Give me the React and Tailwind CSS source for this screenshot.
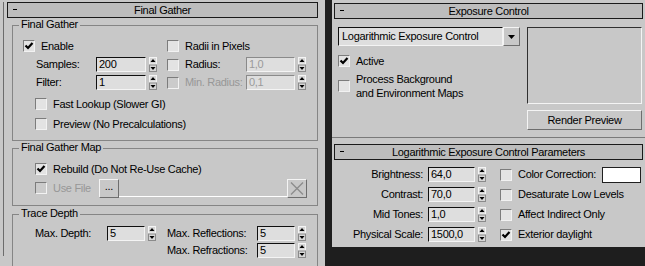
import React from "react";

const fontCls = "font-['Liberation_Sans',Arial,sans-serif] text-[11px] tracking-[-0.3px] leading-[13px]";

function Check({ checked, disabled }) {
  return (
    <span
      className={`flex h-[12px] w-[12px] shrink-0 items-center justify-center border border-t-[#7c7c7c] border-l-[#7c7c7c] border-b-[#f2f2f2] border-r-[#f2f2f2] ${
        disabled ? "bg-[#cbcbcb]" : "bg-[#e3e3e3]"
      }`}
    >
      {checked && (
        <svg width="10" height="10" viewBox="0 0 10 10">
          <path d="M1.5 4.5 L4 7 L8.5 2" stroke="#000" strokeWidth="2.2" fill="none" />
        </svg>
      )}
    </span>
  );
}

function CheckRow({ label, checked, disabled, className = "" }) {
  return (
    <div className={`flex h-[16px] items-center gap-[6px] ${className}`}>
      <Check checked={checked} disabled={disabled} />
      <span className={`whitespace-nowrap ${disabled ? "text-[#979797]" : "text-black"}`}>{label}</span>
    </div>
  );
}

function Spinner() {
  return (
    <span className="flex h-[15px] w-[8px] shrink-0">
      <svg width="8" height="15" viewBox="0 0 8 15">
        <rect x="0" y="0" width="8" height="15" fill="#d6d6d6" />
        <rect x="0.5" y="0.5" width="7" height="6.5" fill="none" stroke="#f4f4f4" />
        <rect x="0.5" y="8" width="7" height="6.5" fill="none" stroke="#8a8a8a" />
        <path d="M4 2 L6.5 5 L1.5 5 Z" fill="#000" />
        <path d="M1.5 10 L6.5 10 L4 13 Z" fill="#000" />
      </svg>
    </span>
  );
}

function Field({ value, className = "", disabled }) {
  return (
    <span
      className={`flex h-[15px] shrink-0 items-center border border-b-[#f4f4f4] border-r-[#f4f4f4] bg-[#dedede] pl-[2px] ${
        disabled ? "border-t-[#8a8a8a] border-l-[#8a8a8a] text-[#9a9a9a]" : "border-t-[#101010] border-l-[#101010] text-black"
      } ${className}`}
    >
      {value}
    </span>
  );
}

function Header({ title, className = "" }) {
  return (
    <div className={`relative flex h-[16px] items-center justify-center border border-[#1a1a1a] bg-[#bdbdbd] ${className}`}>
      <span className="absolute left-[5px] top-[6px] h-[1px] w-[4px] bg-black" />
      <span className="text-black">{title}</span>
    </div>
  );
}

function Group({ title, className = "", children }) {
  return (
    <div className={`relative border border-[#858585] ${className}`}>
      <span className="absolute -top-[8px] left-[6px] bg-[#c8c8c8] px-[2px] text-black">{title}</span>
      {children}
    </div>
  );
}

function Button({ children, className = "" }) {
  return (
    <span
      className={`flex items-center justify-center border border-t-[#f4f4f4] border-l-[#f4f4f4] border-b-[#6e6e6e] border-r-[#6e6e6e] bg-[#c8c8c8] text-black ${className}`}
    >
      {children}
    </span>
  );
}

function ParamRow({ label, value, check, checked, swatch, className = "" }) {
  return (
    <div className={`flex h-[15px] items-center ${className}`}>
      <span className="mr-[5px] w-[91px] whitespace-nowrap text-right">{label}</span>
      <Field value={value} className="w-[47px]" />
      <span className="ml-[3px]">
        <Spinner />
      </span>
      <div className="ml-[14px] flex items-center gap-[6px]">
        <Check checked={checked} />
        <span className={`whitespace-nowrap ${swatch ? "w-[78px]" : ""}`}>{check}</span>
        {swatch && <span className="h-[16px] w-[39px] border border-[#202020] bg-white" />}
      </div>
    </div>
  );
}

export default function App() {
  return (
    <div className={`flex h-[266px] w-[645px] overflow-hidden bg-[#1e1e1e] ${fontCls}`}>
      {/* left: final gather rollout */}
      <div className="h-full w-[325px] shrink-0 bg-[#c8c8c8] pl-[3px] pt-[12px]">
        <div className="h-full border-l border-[#6c6c6c] pl-[3px]">
          <Header title="Final Gather" className="-mt-[10px] w-[311px]" />

          <Group title="Final Gather" className="ml-[5px] mt-[7px] h-[116px] w-[306px] pt-[12px]">
            <div className="flex">
              <div className="w-[154px] pl-[10px]">
                <CheckRow label="Enable" checked />
              </div>
              <CheckRow label="Radii in Pixels" />
            </div>
            <div className="mt-[3px] flex h-[15px] items-center">
              <div className="flex w-[154px] items-center pl-[23px]">
                <span className="w-[60px]">Samples:</span>
                <Field value="200" className="w-[50px]" />
                <span className="ml-[3px]"><Spinner /></span>
              </div>
              <div className="flex items-center">
                <Check />
                <span className="ml-[6px] w-[61px]">Radius:</span>
                <Field value="1,0" className="w-[49px]" disabled />
                <span className="ml-[3px]"><Spinner /></span>
              </div>
            </div>
            <div className="mt-[3px] flex h-[15px] items-center">
              <div className="flex w-[154px] items-center pl-[23px]">
                <span className="w-[60px]">Filter:</span>
                <Field value="1" className="w-[50px]" />
                <span className="ml-[3px]"><Spinner /></span>
              </div>
              <div className="flex items-center">
                <Check disabled />
                <span className="ml-[6px] w-[61px] whitespace-nowrap text-[#979797]">Min. Radius:</span>
                <Field value="0,1" className="w-[49px]" disabled />
                <span className="ml-[3px]"><Spinner /></span>
              </div>
            </div>
            <CheckRow label="Fast Lookup (Slower GI)" className="ml-[22px] mt-[6px]" />
            <CheckRow label="Preview (No Precalculations)" className="ml-[22px] mt-[4px]" />
          </Group>

          <Group title="Final Gather Map" className="ml-[5px] mt-[7px] h-[58px] w-[306px] pt-[12px]">
            <CheckRow label="Rebuild (Do Not Re-Use Cache)" checked className="ml-[22px]" />
            <div className="mt-[1px] flex h-[20px] items-center pl-[22px]">
              <Check disabled />
              <span className="ml-[6px] w-[46px] text-[#979797]">Use File</span>
              <Button className="h-[19px] w-[20px] pb-[3px]">...</Button>
              <span className="h-[18px] w-[168px] border-b border-white" />
              <Button className="h-[19px] w-[20px]">
                <svg width="14" height="13" viewBox="0 0 14 13">
                  <path d="M1 0.5 L13 12.5 M13 0.5 L1 12.5" stroke="#8c8c8c" strokeWidth="1.4" />
                </svg>
              </Button>
            </div>
          </Group>

          <Group title="Trace Depth" className="ml-[5px] mt-[8px] h-[60px] w-[306px] pt-[11px]">
            <div className="flex h-[15px] items-center">
              <div className="flex w-[154px] items-center pl-[22px]">
                <span className="w-[72px]">Max. Depth:</span>
                <Field value="5" className="w-[38px]" />
                <span className="ml-[3px]"><Spinner /></span>
              </div>
              <div className="flex items-center">
                <span className="w-[90px] whitespace-nowrap">Max. Reflections:</span>
                <Field value="5" className="w-[38px]" />
                <span className="ml-[3px]"><Spinner /></span>
              </div>
            </div>
            <div className="mt-[2px] flex h-[15px] items-center pl-[154px]">
              <span className="w-[90px] whitespace-nowrap">Max. Refractions:</span>
              <Field value="5" className="w-[38px]" />
              <span className="ml-[3px]"><Spinner /></span>
            </div>
          </Group>
        </div>
      </div>

      {/* right: exposure control */}
      <div className="ml-[7px] h-[247px] w-[313px] shrink-0 bg-[#c8c8c8]">
        <Header title="Exposure Control" className="ml-[2px] mt-[3px] w-[309px]" />
        <div className="mt-[8px] flex pl-[6px]">
          <div className="w-[182px]">
            <div className="flex h-[19px]">
              <span className="flex flex-1 items-center border border-t-[#101010] border-l-[#101010] border-b-[#f4f4f4] border-r-[#f4f4f4] bg-[#dedede] pl-[3px] whitespace-nowrap">
                Logarithmic Exposure Control
              </span>
              <Button className="h-[19px] w-[17px]">
                <svg width="7" height="4" viewBox="0 0 7 4">
                  <path d="M0 0 L7 0 L3.5 4 Z" fill="#000" />
                </svg>
              </Button>
            </div>
            <CheckRow label="Active" checked className="mt-[7px]" />
            <div className="mt-[3px] flex items-center gap-[6px]">
              <Check />
              <span className="leading-[14px]">
                Process Background
                <br />
                and Environment Maps
              </span>
            </div>
          </div>
          <div className="ml-[7px] w-[115px]">
            <div className="h-[77px] border border-t-[#303030] border-l-[#303030] border-b-[#f4f4f4] border-r-[#f4f4f4] bg-[#c8c8c8]" />
            <Button className="mt-[6px] h-[20px] w-[115px]">Render Preview</Button>
          </div>
        </div>
        <div className="mt-[7px] h-[1px] bg-[#7a7a7a]" />
        <Header title="Logarithmic Exposure Control Parameters" className="ml-[2px] mt-[6px] w-[309px]" />
        <div className="mt-[7px] flex flex-col gap-[5px]">
          <ParamRow label="Brightness:" value="64,0" check="Color Correction:" swatch />
          <ParamRow label="Contrast:" value="70,0" check="Desaturate Low Levels" />
          <ParamRow label="Mid Tones:" value="1,0" check="Affect Indirect Only" />
          <ParamRow label="Physical Scale:" value="1500,0" check="Exterior daylight" checked />
        </div>
      </div>
    </div>
  );
}
